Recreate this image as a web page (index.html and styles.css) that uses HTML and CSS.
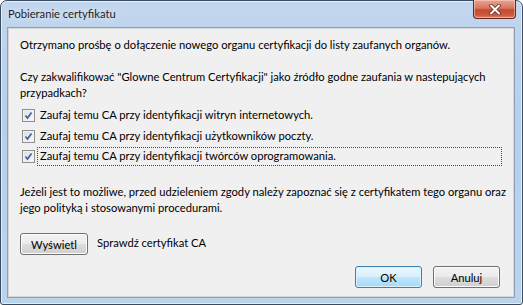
FILE: index.html
```html
<!DOCTYPE html>
<html lang="pl">
<head>
    <meta charset="UTF-8">
    <title>Pobieranie certyfikatu</title>
    <link rel="stylesheet" href="styles.css">
</head>
<body>
    <div class="window">
        <div class="titlebar">
            <span class="title">Pobieranie certyfikatu</span>
            <button class="close" aria-label="Zamknij">
                <svg width="12" height="11" viewBox="0 0 12 11">
                    <path d="M2 1.5 L10 9.5 M10 1.5 L2 9.5" stroke="#6b2a22" stroke-width="3.6" stroke-linecap="round"/>
                    <path d="M2 1.5 L10 9.5 M10 1.5 L2 9.5" stroke="#ffffff" stroke-width="2" stroke-linecap="round"/>
                </svg>
            </button>
        </div>
        <div class="content">
            <p class="intro">Otrzymano prośbę o dołączenie nowego organu certyfikacji do listy zaufanych organów.</p>
            <p class="question">Czy zakwalifikować "Glowne Centrum Certyfikacji" jako źródło godne zaufania w nastepujących<br>przypadkach?</p>
            <div class="options">
                <label class="option">
                    <span class="check"><svg width="9" height="9" viewBox="0 0 9 9"><path d="M1.5 4.5 L3.5 7 L7.5 1.5" fill="none" stroke="#4d61a0" stroke-width="1.8"/></svg></span>
                    <span class="label">Zaufaj temu CA przy identyfikacji witryn internetowych.</span>
                </label>
                <label class="option">
                    <span class="check"><svg width="9" height="9" viewBox="0 0 9 9"><path d="M1.5 4.5 L3.5 7 L7.5 1.5" fill="none" stroke="#4d61a0" stroke-width="1.8"/></svg></span>
                    <span class="label">Zaufaj temu CA przy identyfikacji użytkowników poczty.</span>
                </label>
                <label class="option">
                    <span class="check"><svg width="9" height="9" viewBox="0 0 9 9"><path d="M1.5 4.5 L3.5 7 L7.5 1.5" fill="none" stroke="#4d61a0" stroke-width="1.8"/></svg></span>
                    <span class="label focused">Zaufaj temu CA przy identyfikacji twórców oprogramowania.</span>
                </label>
            </div>
            <p class="notice">Jeżeli jest to możliwe, przed udzieleniem zgody należy zapoznać się z certyfikatem tego organu oraz<br>jego polityką i stosowanymi procedurami.</p>
            <div class="view-row">
                <button class="btn">Wyświetl</button>
                <span class="view-label">Sprawdź certyfikat CA</span>
            </div>
            <div class="actions">
                <button class="btn default">OK</button>
                <button class="btn">Anuluj</button>
            </div>
        </div>
    </div>
</body>
</html>
```

FILE: styles.css
```css
body {
    margin: 0;
    background: #ffffff;
    font-family: Lato, 'Noto Sans', sans-serif;
    font-size: 11.2px;
    color: #000;
}
.window {
    width: 523px;
    height: 305px;
    box-sizing: border-box;
    border: 1px solid #3c4c60;
    border-radius: 7px 7px 3px 3px;
    background: linear-gradient(to bottom, #c2d6ee 0%, #b7cfea 40%, #bcd3ec 100%);
    box-shadow: inset 0 0 0 1px rgba(255,255,255,0.6);
    display: flex;
    flex-direction: column;
}
.titlebar {
    height: 26px;
    display: flex;
    align-items: flex-start;
    justify-content: space-between;
}
.title {
    margin: 6px 0 0 7px;
    color: #1e1e1e;
    text-shadow: 0 0 6px rgba(255,255,255,0.9);
}
.close {
    width: 43px;
    height: 19px;
    margin: -1px 6px 0 0;
    padding: 0;
    border: 1px solid #5c2a28;
    border-top: none;
    border-radius: 0 0 4px 4px;
    background: linear-gradient(to bottom, #e8a493 0%, #d8775f 45%, #c24a2e 55%, #d0583d 85%, #e2886a 100%);
    box-shadow: inset 0 0 0 1px rgba(255,220,200,0.5);
    display: flex;
    align-items: center;
    justify-content: center;
}
.content {
    flex: 1;
    margin: 0 7px 6px 6px;
    border: 1px solid #8ca0b8;
    box-shadow: inset 0 0 0 1px #d7d7d7;
    background: #f0f0f0;
    padding: 9px 12px 0 12px;
    display: flex;
    flex-direction: column;
}
p {
    margin: 0;
    line-height: 16px;
    white-space: nowrap;
}
.intro {
    margin-bottom: 16px;
}
.question {
    margin-bottom: 6px;
}
.options {
    display: flex;
    flex-direction: column;
    gap: 3.5px;
    margin-left: 2px;
}
.option {
    display: flex;
    align-items: center;
    height: 17px;
}
.check {
    width: 11px;
    height: 11px;
    border: 1px solid #8e8f8f;
    background: linear-gradient(to bottom right, #dedede, #fbfbfb);
    box-shadow: inset 0 0 0 1px #f2f2f2;
    display: flex;
    align-items: center;
    justify-content: center;
    flex: none;
}
.label {
    margin-left: 3px;
    padding: 0 2px 1px;
    line-height: 16px;
}
.label.focused {
    outline: 1px dotted #444;
    width: 463px;
    box-sizing: border-box;
}
.notice {
    margin-top: 19px;
}
.view-row {
    display: flex;
    align-items: center;
    gap: 9px;
    margin-top: 17px;
}
.view-label {
    margin-top: -3px;
}
.btn {
    font-family: inherit;
    font-size: 11.2px;
    width: 67px;
    height: 22px;
    padding: 0;
    border: 1px solid #707070;
    border-radius: 3px;
    background: linear-gradient(to bottom, #f2f2f2 0%, #ebebeb 50%, #dddddd 51%, #cfcfcf 100%);
    box-shadow: inset 0 0 0 1px #fcfcfc;
    color: #000;
}
.view-row .btn {
    width: 68px;
}
.btn.default {
    border-color: #3c7fb1;
    background: linear-gradient(to bottom, #eaf6fd 0%, #d9f0fc 50%, #bee6fd 51%, #a7d9f5 100%);
    box-shadow: inset 0 0 0 1px #dcf2fc;
}
.actions {
    display: flex;
    justify-content: flex-end;
    gap: 11px;
    margin-top: 11px;
    padding-right: 2px;
}
```
